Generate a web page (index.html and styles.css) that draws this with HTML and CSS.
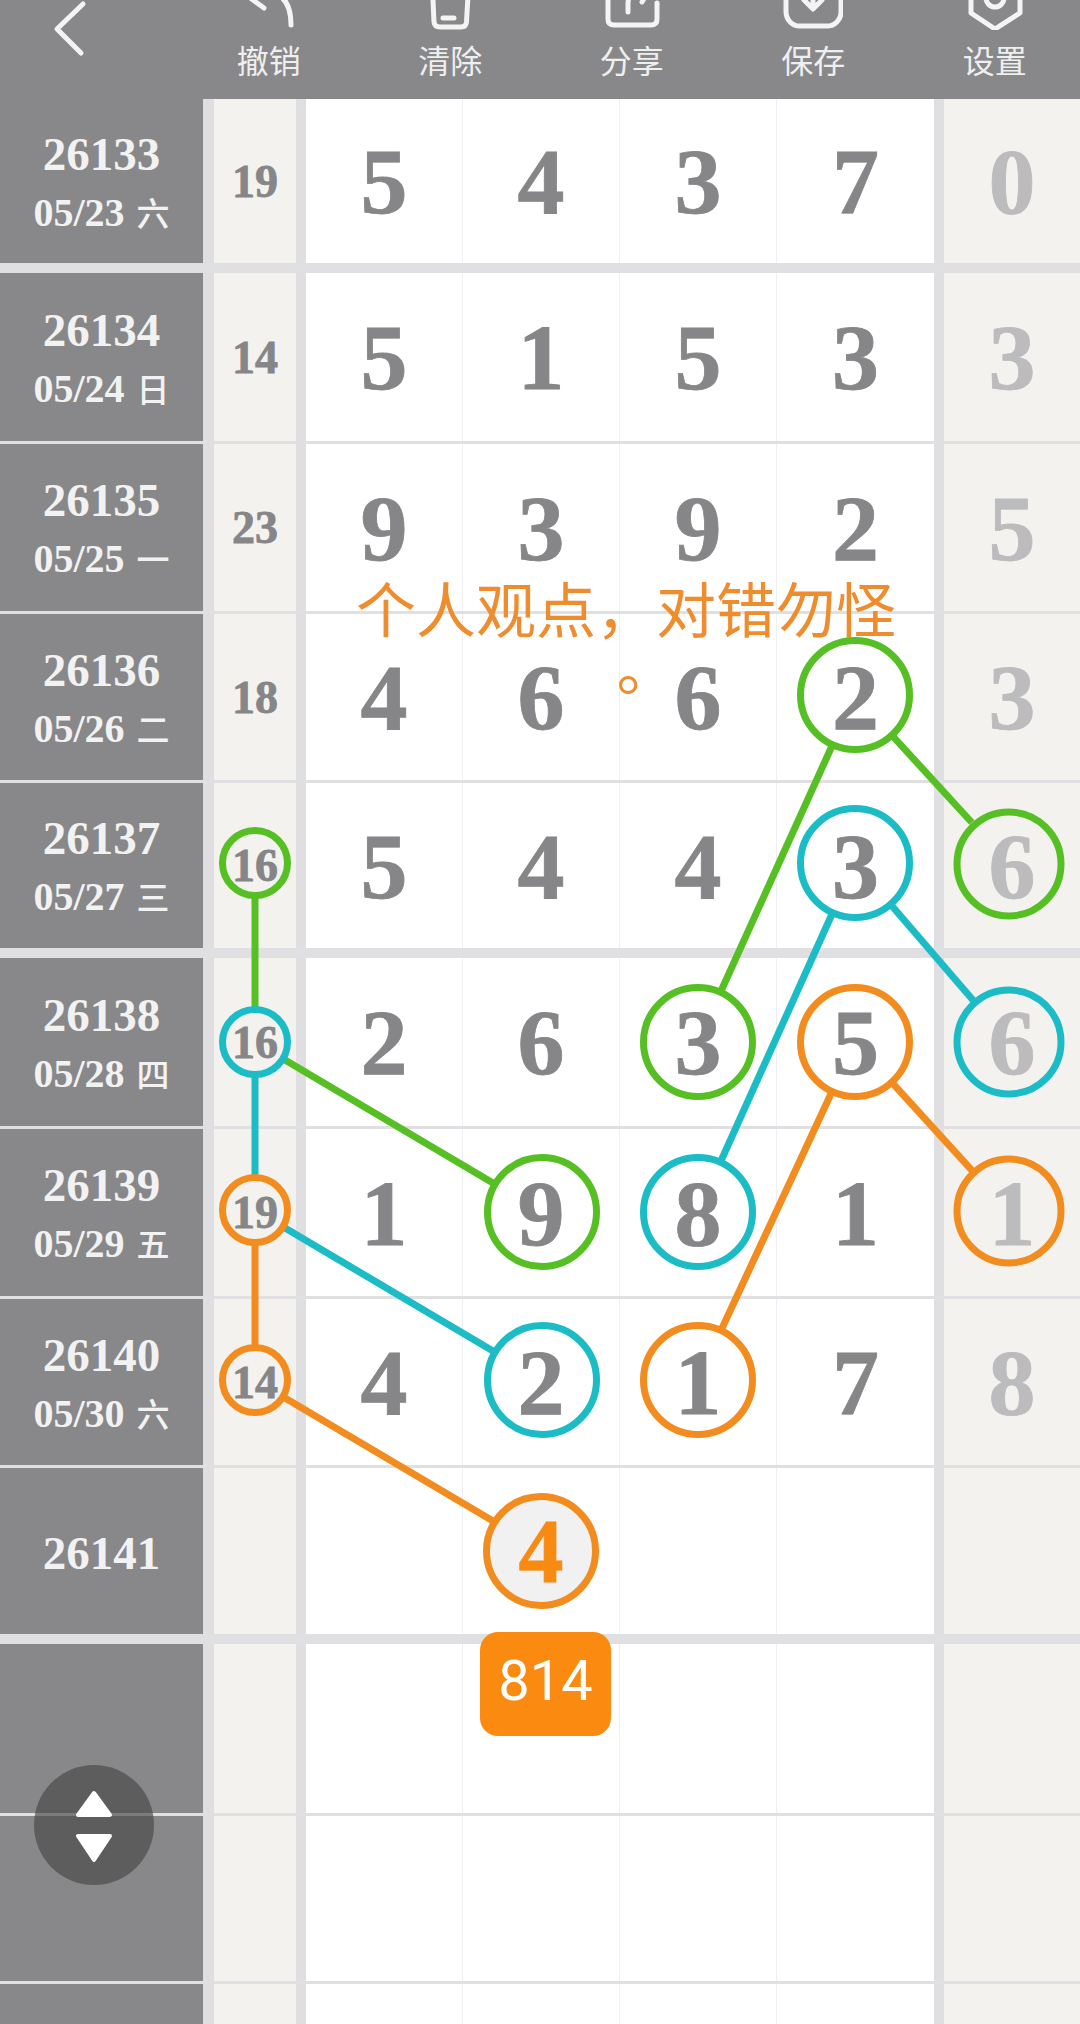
FILE: index.html
```html
<!DOCTYPE html>
<html lang="zh-CN">
<head>
  <meta charset="UTF-8" />
  <title>走势图</title>
  <link rel="stylesheet" href="styles.css">
</head>
<body>
  <div class="page">
    <header class="topbar">
      <div class="back">
        <svg width="40" height="60" viewBox="0 0 40 60"><path d="M30 4 L4 29 L28 53" /></svg>
      </div>
      <div class="tool">
        <svg width="60" height="60" viewBox="0 0 60 60"><path d="M25 38 L3 22 L25 4 M3 22 H26 Q52 22 52 55" /></svg>
        <span>撤销</span>
      </div>
      <div class="tool">
        <svg width="60" height="60" viewBox="0 0 60 60"><path d="M6 8 H54 M12 8 L14 52 Q14.500 57 20 57 H41 Q46 57 46.500 52 L49 8 M23 48 H34" /></svg>
        <span>清除</span>
      </div>
      <div class="tool">
        <svg width="60" height="60" viewBox="0 0 60 60"><path d="M24 18 H12 Q6 18 6 24 V49 Q6 55 12 55 H49 Q55 55 55 49 V33 M26 42 V34 Q26 18 46 18 M38 8 L48 18 L40 32" /></svg>
        <span>分享</span>
      </div>
      <div class="tool">
        <svg width="60" height="60" viewBox="0 0 60 60"><rect x="3" y="8" width="55" height="48" rx="14" /><path d="M21 30 L30 39 L39 30 M30 12 V38" /></svg>
        <span>保存</span>
      </div>
      <div class="tool">
        <svg width="60" height="60" viewBox="0 0 60 60"><path d="M30 1 L55 15 V43 L30 59 L6 43 V15 Z" /><circle cx="30" cy="28" r="9" /></svg>
        <span>设置</span>
      </div>
    </header>

    <div class="board">
      <div class="row thick">
        <div class="issue"><b>26133</b><small>05/23 <i>六</i></small></div><div class="sum">19</div>
        <div class="num">5</div><div class="num">4</div><div class="num">3</div><div class="num">7</div><div class="extra">0</div>
      </div>
      <div class="row">
        <div class="issue"><b>26134</b><small>05/24 <i>日</i></small></div><div class="sum">14</div>
        <div class="num">5</div><div class="num">1</div><div class="num">5</div><div class="num">3</div><div class="extra">3</div>
      </div>
      <div class="row">
        <div class="issue"><b>26135</b><small>05/25 <i>一</i></small></div><div class="sum">23</div>
        <div class="num">9</div><div class="num">3</div><div class="num">9</div><div class="num">2</div><div class="extra">5</div>
      </div>
      <div class="row">
        <div class="issue"><b>26136</b><small>05/26 <i>二</i></small></div><div class="sum">18</div>
        <div class="num">4</div><div class="num">6</div><div class="num">6</div><div class="num">2</div><div class="extra">3</div>
      </div>
      <div class="row thick">
        <div class="issue"><b>26137</b><small>05/27 <i>三</i></small></div><div class="sum">16</div>
        <div class="num">5</div><div class="num">4</div><div class="num">4</div><div class="num">3</div><div class="extra">6</div>
      </div>
      <div class="row">
        <div class="issue"><b>26138</b><small>05/28 <i>四</i></small></div><div class="sum">16</div>
        <div class="num">2</div><div class="num">6</div><div class="num">3</div><div class="num">5</div><div class="extra">6</div>
      </div>
      <div class="row">
        <div class="issue"><b>26139</b><small>05/29 <i>五</i></small></div><div class="sum">19</div>
        <div class="num">1</div><div class="num">9</div><div class="num">8</div><div class="num">1</div><div class="extra">1</div>
      </div>
      <div class="row">
        <div class="issue"><b>26140</b><small>05/30 <i>六</i></small></div><div class="sum">14</div>
        <div class="num">4</div><div class="num">2</div><div class="num">1</div><div class="num">7</div><div class="extra">8</div>
      </div>
      <div class="row thick">
        <div class="issue"><b>26141</b></div><div class="sum"></div>
        <div class="num"></div><div class="num"><span class="picked">4</span></div><div class="num"></div><div class="num"></div><div class="extra"></div>
      </div>
      <div class="row">
        <div class="issue"></div><div class="sum"></div>
        <div class="num"></div><div class="num"></div><div class="num"></div><div class="num"></div><div class="extra"></div>
      </div>
      <div class="row">
        <div class="issue"></div><div class="sum"></div>
        <div class="num"></div><div class="num"></div><div class="num"></div><div class="num"></div><div class="extra"></div>
      </div>
      <div class="row">
        <div class="issue"></div><div class="sum"></div>
        <div class="num"></div><div class="num"></div><div class="num"></div><div class="num"></div><div class="extra"></div>
      </div>
    </div>

    <!-- lines and rings drawn over the numbers -->
    <svg class="links" width="1080" height="2024" viewBox="0 0 1080 2024">
      <g class="green">
        <line x1="831.500" y1="747" x2="721.500" y2="990" />
        <line x1="893.500" y1="737" x2="971.800" y2="822.500" />
        <line x1="255" y1="898" x2="255" y2="1007" />
        <line x1="285" y1="1060" x2="493" y2="1183" />
        <circle cx="855" cy="695" r="54.500" />
        <circle cx="1009" cy="864" r="52" />
        <circle cx="698" cy="1042" r="54.500" />
        <circle cx="255" cy="863" r="32.500" />
        <circle cx="542" cy="1212" r="54.500" />
      </g>
      <g class="cyan">
        <line x1="831.600" y1="915" x2="721.400" y2="1160" />
        <line x1="892.200" y1="906.200" x2="973.100" y2="1000.300" />
        <line x1="255" y1="1077" x2="255" y2="1175" />
        <line x1="285" y1="1228" x2="493" y2="1351" />
        <circle cx="855" cy="863" r="54.500" />
        <circle cx="1009" cy="1042" r="52" />
        <circle cx="698" cy="1212" r="54.500" />
        <circle cx="255" cy="1042" r="32.500" />
        <circle cx="542" cy="1380" r="54.500" />
      </g>
      <g class="orange">
        <line x1="831" y1="1093.700" x2="722" y2="1328.300" />
        <line x1="893.400" y1="1084.100" x2="971.900" y2="1170.400" />
        <line x1="255" y1="1245" x2="255" y2="1345" />
        <line x1="285" y1="1398" x2="493" y2="1521" />
        <circle cx="855" cy="1042" r="54.500" />
        <circle cx="1009" cy="1211" r="52" />
        <circle cx="698" cy="1380" r="54.500" />
        <circle cx="255" cy="1210" r="32.500" />
        <circle cx="255" cy="1380" r="32.500" />
      </g>
    </svg>

    <div class="notice">
      <div>个人观点，对错勿怪</div>
      <div class="stop">。</div>
    </div>

    <div class="badge">814</div>

    <div class="scroller">
      <svg width="60" height="90" viewBox="0 0 60 90">
        <path d="M30 13 L46 35 H14 Z" />
        <path d="M14 56 H46 L30 80 Z" />
      </svg>
    </div>
  </div>
</body>
</html>
```

FILE: styles.css
```css
body {
  margin: 0;
  background: #fff;
  font-family: "Liberation Serif", "Noto Sans CJK SC", serif;
}

.page {
  position: relative;
  width: 1080px;
  height: 2024px;
  overflow: hidden;
}

/* top bar */
.topbar {
  display: flex;
  height: 99px;
  padding-bottom: 18px;
  box-sizing: border-box;
  overflow: hidden;
  background: #888789;
  color: #efefef;
}

.topbar svg {
  fill: none;
  stroke: #f4f4f4;
  stroke-width: 5;
  stroke-linecap: round;
  stroke-linejoin: round;
}

.back {
  flex: 0 0 178px;
  padding-left: 53px;
  box-sizing: border-box;
}

.tool {
  flex: 0 0 181.500px;
  display: flex;
  flex-direction: column;
  justify-content: flex-end;
  align-items: center;
}

.tool svg {
  flex: none;
  margin-bottom: 7px;
}

.tool span {
  font-family: "Noto Sans CJK SC", sans-serif;
  font-size: 32px;
  line-height: 44px;
}

/* table */
.board {
  display: grid;
  grid-template-rows: 174px 171px 170px 169px 175px 171px 170px 169px 176px 172px 168px 60px;
}

.row {
  display: grid;
  grid-template-columns: 203px 11px 82px 10px repeat(4, 157px) 10px 136px;
  border-bottom: 3px solid #e0dfe2;
  background: #dfdee1;
  color: #868587;
  font-weight: bold;
  -webkit-text-stroke: 0.8px #868587;
}

.row.thick {
  border-bottom-width: 10px;
}

.issue {
  grid-column: 1;
  display: flex;
  flex-direction: column;
  justify-content: center;
  align-items: center;
  padding-top: 4px;
  background: #888789;
  color: #f2f2f2;
  -webkit-text-stroke: 0;
}

.issue b {
  font-size: 47px;
  line-height: 58px;
}

.issue small {
  font-size: 40px;
  line-height: 58px;
}

.issue i {
  font-family: "Noto Sans CJK SC", sans-serif;
  font-style: normal;
  font-weight: 500;
  font-size: 33px;
  margin-left: 2px;
}

.sum,
.num,
.extra {
  display: flex;
  justify-content: center;
  align-items: center;
}

.sum {
  grid-column: 3;
  background: #f4f2ef;
  font-size: 46px;
}

.num {
  background: #fff;
  border-right: 1px solid #efeef2;
  font-size: 94px;
}

.num:nth-child(3) {
  grid-column: 5;
}

.num:nth-child(6) {
  border-right: 0;
}

.extra {
  grid-column: 10;
  background: #f4f2ef;
  color: #bcbbbd;
  font-size: 94px;
  -webkit-text-stroke: 0.8px #bcbbbd;
}

.picked {
  display: flex;
  justify-content: center;
  align-items: center;
  width: 102px;
  height: 102px;
  border: 7px solid #f28c1e;
  border-radius: 50%;
  background: #f1f1f1;
  color: #f88a12;
  font-size: 90px;
  -webkit-text-stroke: 0.8px #f88a12;
}

/* overlays */
.links {
  position: absolute;
  top: 0;
  left: 0;
  fill: none;
  stroke-width: 7;
}

.green { stroke: #56bf24; }
.cyan { stroke: #1cbcc6; }
.orange { stroke: #f28c1e; }

.notice {
  position: absolute;
  top: 569px;
  left: 356px;
  width: 540px;
  font-family: "Noto Sans CJK SC", sans-serif;
  font-size: 60px;
  line-height: 75px;
  text-align: center;
  color: #ee8c2e;
}

.stop {
  padding-left: 4px;
  font-family: "Noto Sans CJK TC", sans-serif;
}

.badge {
  position: absolute;
  top: 1632px;
  left: 480px;
  width: 131px;
  height: 104px;
  border-radius: 18px;
  background: #fb8a10;
  color: #fff;
  font-family: Roboto, sans-serif;
  font-size: 56px;
  line-height: 98px;
  text-align: center;
}

.scroller {
  position: absolute;
  top: 1765px;
  left: 34px;
  width: 120px;
  height: 120px;
  display: flex;
  justify-content: center;
  align-items: center;
  border-radius: 50%;
  background: rgba(70, 70, 70, 0.65);
}

.scroller svg {
  fill: #fff;
  stroke: #fff;
  stroke-width: 4;
  stroke-linejoin: round;
}
```
